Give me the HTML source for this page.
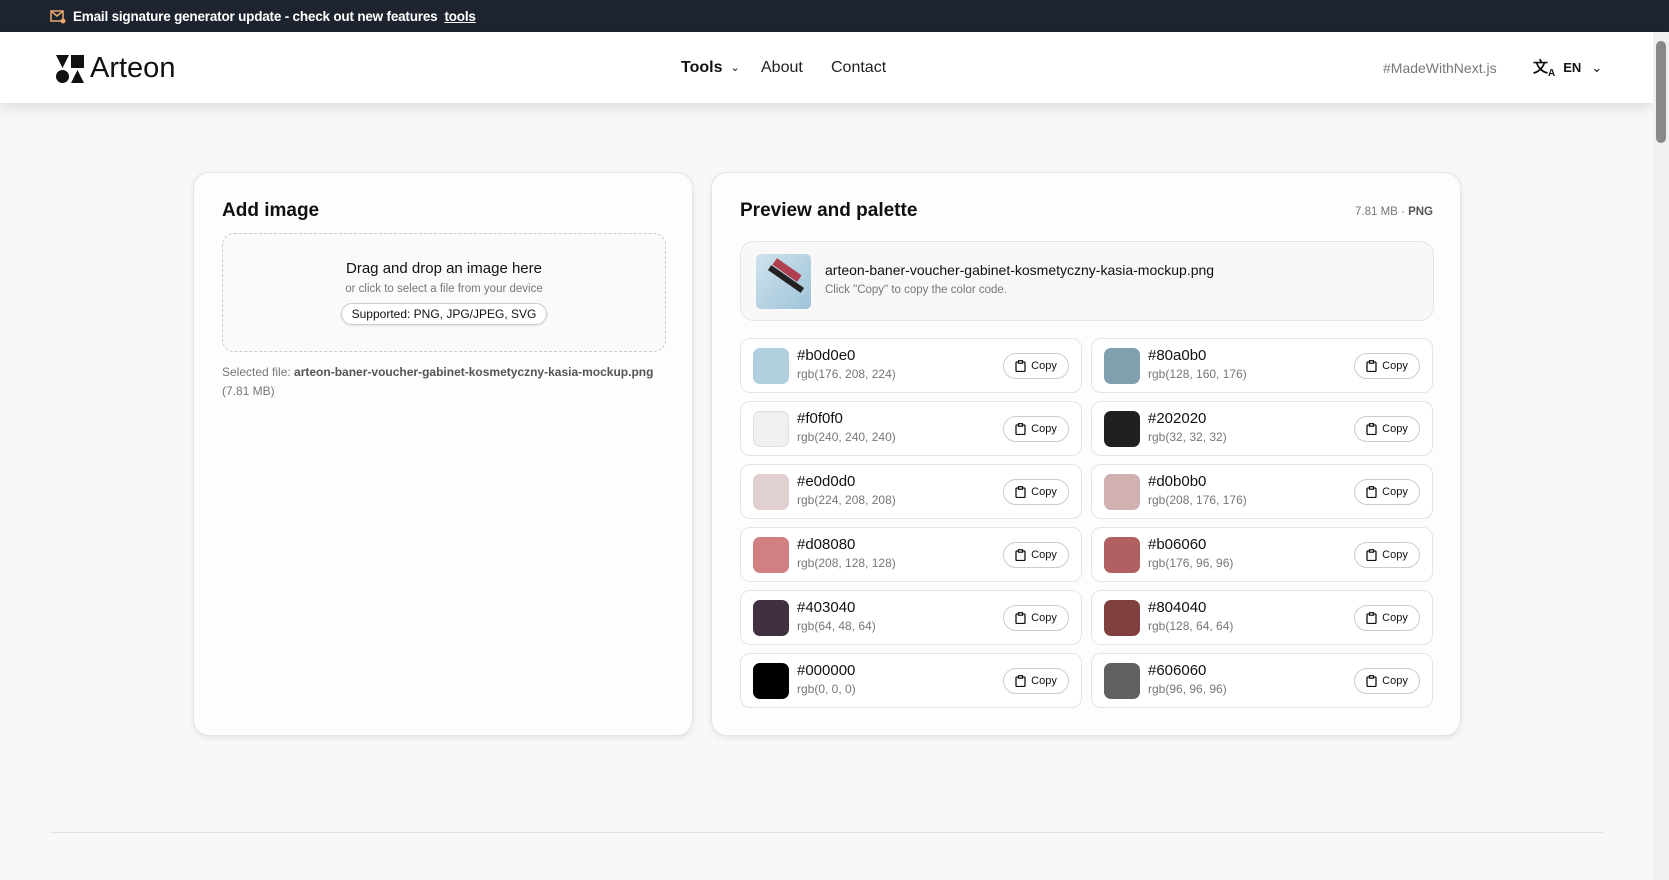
<!DOCTYPE html>
<html><head><meta charset="utf-8"><style>
*{box-sizing:border-box;margin:0;padding:0}
body{width:1669px;height:880px;overflow:hidden;background:#f8f8f8;font-family:"Liberation Sans",sans-serif;color:#111;position:relative}
.top{height:32px;background:#1d2430;color:#fff;font-size:13.5px;font-weight:bold;display:flex;align-items:center;padding-left:50px;gap:7px;letter-spacing:-0.2px}
.top u{text-decoration:underline}
.hdr{position:absolute;top:32px;left:0;width:1653px;height:71px;background:#fff;box-shadow:0 4px 14px rgba(0,0,0,.12);}
.logo{position:absolute;left:56px;top:20px;display:flex;align-items:center;gap:6px;font-size:29px}
.nav{position:absolute;top:0;height:71px;display:flex;align-items:center;font-size:16px}
.sb{position:absolute;right:0;top:32px;width:16px;height:848px;background:#f0f0f0}
.sb div{position:absolute;left:3px;top:9px;width:10px;height:102px;background:#888;border-radius:5px}
.card{position:absolute;top:172px;height:564px;background:#fdfdfd;border:1px solid #e4e4e4;border-radius:16px;box-shadow:0 2px 6px rgba(0,0,0,.08)}
h2{position:absolute;font-size:19px;font-weight:bold}
.dz{position:absolute;left:28px;top:60px;width:444px;height:119px;border:1px dashed #ccc;border-radius:12px;background:#fafafa;text-align:center}
.pill{display:inline-block;border:1px solid #ccc;border-radius:12px;background:#fff;padding:3px 10px;font-size:12px;box-shadow:0 1px 2px rgba(0,0,0,.1)}
.row{position:absolute;width:342px;height:55px;border:1px solid #e4e4e4;border-radius:10px;background:#fff}
.sw{position:absolute;left:12px;top:9px;width:36px;height:36px;border-radius:7px}
.hx{position:absolute;left:56px;top:8px;font-size:15px}
.rg{position:absolute;left:56px;top:28px;font-size:12px;color:#777}
.cp{position:absolute;right:12px;top:14px;width:66px;height:26px;border:1px solid #ccc;border-radius:13px;font-size:11px;display:flex;align-items:center;justify-content:center;gap:5px;background:#fff}
</style></head><body>
<div class="top"><svg width="16" height="16" viewBox="0 0 16 16"><rect x="1" y="3" width="12" height="10" fill="none" stroke="#e9a86b" stroke-width="1.5"/><path d="M1 3l6 5 6-5" fill="none" stroke="#e9a86b" stroke-width="1.5"/><circle cx="13" cy="13" r="2.5" fill="#e9a86b"/></svg>Email signature generator update - check out new features <u>tools</u></div>
<div class="hdr">
<div class="logo"><svg width="28" height="28" viewBox="0 0 28 28"><path d="M15 0h13v13h-13z" fill="#111"/><path d="M0 0h13L6.5 13z" fill="#111"/><circle cx="6.5" cy="21.5" r="6.5" fill="#111"/><path d="M21.5 15L28 28H15z" fill="#111"/></svg>Arteon</div>
<div class="nav" style="left:681px;font-weight:bold">Tools <span style="font-size:11px;margin-left:8px;font-weight:normal">&#8964;</span></div>
<div class="nav" style="left:761px;color:#222">About</div>
<div class="nav" style="left:831px;color:#222">Contact</div>
<div class="nav" style="left:1383px;color:#777;font-size:14px">#MadeWithNext.js</div>
<div class="nav" style="left:1533px;font-size:13px;font-weight:bold;gap:8px"><span style="font-size:15px">文<sub style="font-size:10px">A</sub></span>EN <span style="font-weight:normal;margin-left:2px">&#8964;</span></div>
</div>
<div class="sb"><div></div></div>

<div class="card" style="left:193px;width:500px">
<h2 style="left:28px;top:27px">Add image</h2>
<div class="dz"><div style="margin-top:26px;font-size:15px">Drag and drop an image here</div><div style="font-size:11.5px;color:#777;margin-top:6px">or click to select a file from your device</div><div class="pill" style="margin-top:8px">Supported: PNG, JPG/JPEG, SVG</div></div>
<div style="position:absolute;left:28px;top:190px;font-size:12px;color:#777;line-height:19px">Selected file: <b style="color:#555">arteon-baner-voucher-gabinet-kosmetyczny-kasia-mockup.png</b><br>(7.81 MB)</div>
</div>

<div class="card" style="left:711px;width:750px">
<h2 style="left:28px;top:27px">Preview and palette</h2>
<div style="position:absolute;right:27px;top:33px;font-size:11.5px;color:#777">7.81 MB · <b style="color:#555">PNG</b></div>
<div style="position:absolute;left:28px;top:68px;width:694px;height:80px;border:1px solid #e4e4e4;border-radius:14px;background:#f8f8f8">
<div style="position:absolute;left:15px;top:12px;width:55px;height:55px;border-radius:5px;background:linear-gradient(135deg,#cfe3ee,#9fc3d8);overflow:hidden"><div style="position:absolute;left:10px;top:22px;width:40px;height:6px;background:#222;transform:rotate(35deg)"></div><div style="position:absolute;left:16px;top:12px;width:30px;height:8px;background:#b04050;transform:rotate(35deg)"></div></div>
<div style="position:absolute;left:84px;top:20px;font-size:14px">arteon-baner-voucher-gabinet-kosmetyczny-kasia-mockup.png</div>
<div style="position:absolute;left:84px;top:42px;font-size:11.5px;color:#777">Click "Copy" to copy the color code.</div>
</div>
<div id="rows"></div>
</div>
<div style="position:absolute;left:50px;top:832px;width:1553px;height:1px;background:#e2e2e2"></div>
<script>
var c=[["b0d0e0","176, 208, 224"],["80a0b0","128, 160, 176"],["f0f0f0","240, 240, 240"],["202020","32, 32, 32"],["e0d0d0","224, 208, 208"],["d0b0b0","208, 176, 176"],["d08080","208, 128, 128"],["b06060","176, 96, 96"],["403040","64, 48, 64"],["804040","128, 64, 64"],["000000","0, 0, 0"],["606060","96, 96, 96"]];
var h="";c.forEach(function(x,i){var l=28+(i%2)*351,t=165+Math.floor(i/2)*63;
h+='<div class="row" style="left:'+l+'px;top:'+t+'px"><div class="sw" style="background:#'+x[0]+';'+(x[0]=="f0f0f0"?'border:1px solid #e0e0e0':'')+'"></div><div class="hx">#'+x[0]+'</div><div class="rg">rgb('+x[1]+')</div><div class="cp"><svg width="11" height="12" viewBox="0 0 11 12"><rect x="1" y="2" width="9" height="9.5" rx="1" fill="none" stroke="#111" stroke-width="1.3"/><rect x="3.5" y="0.7" width="4" height="2.5" fill="#fff" stroke="#111" stroke-width="1.2"/></svg>Copy</div></div>';});
document.getElementById("rows").innerHTML=h;
</script>
</body></html>
